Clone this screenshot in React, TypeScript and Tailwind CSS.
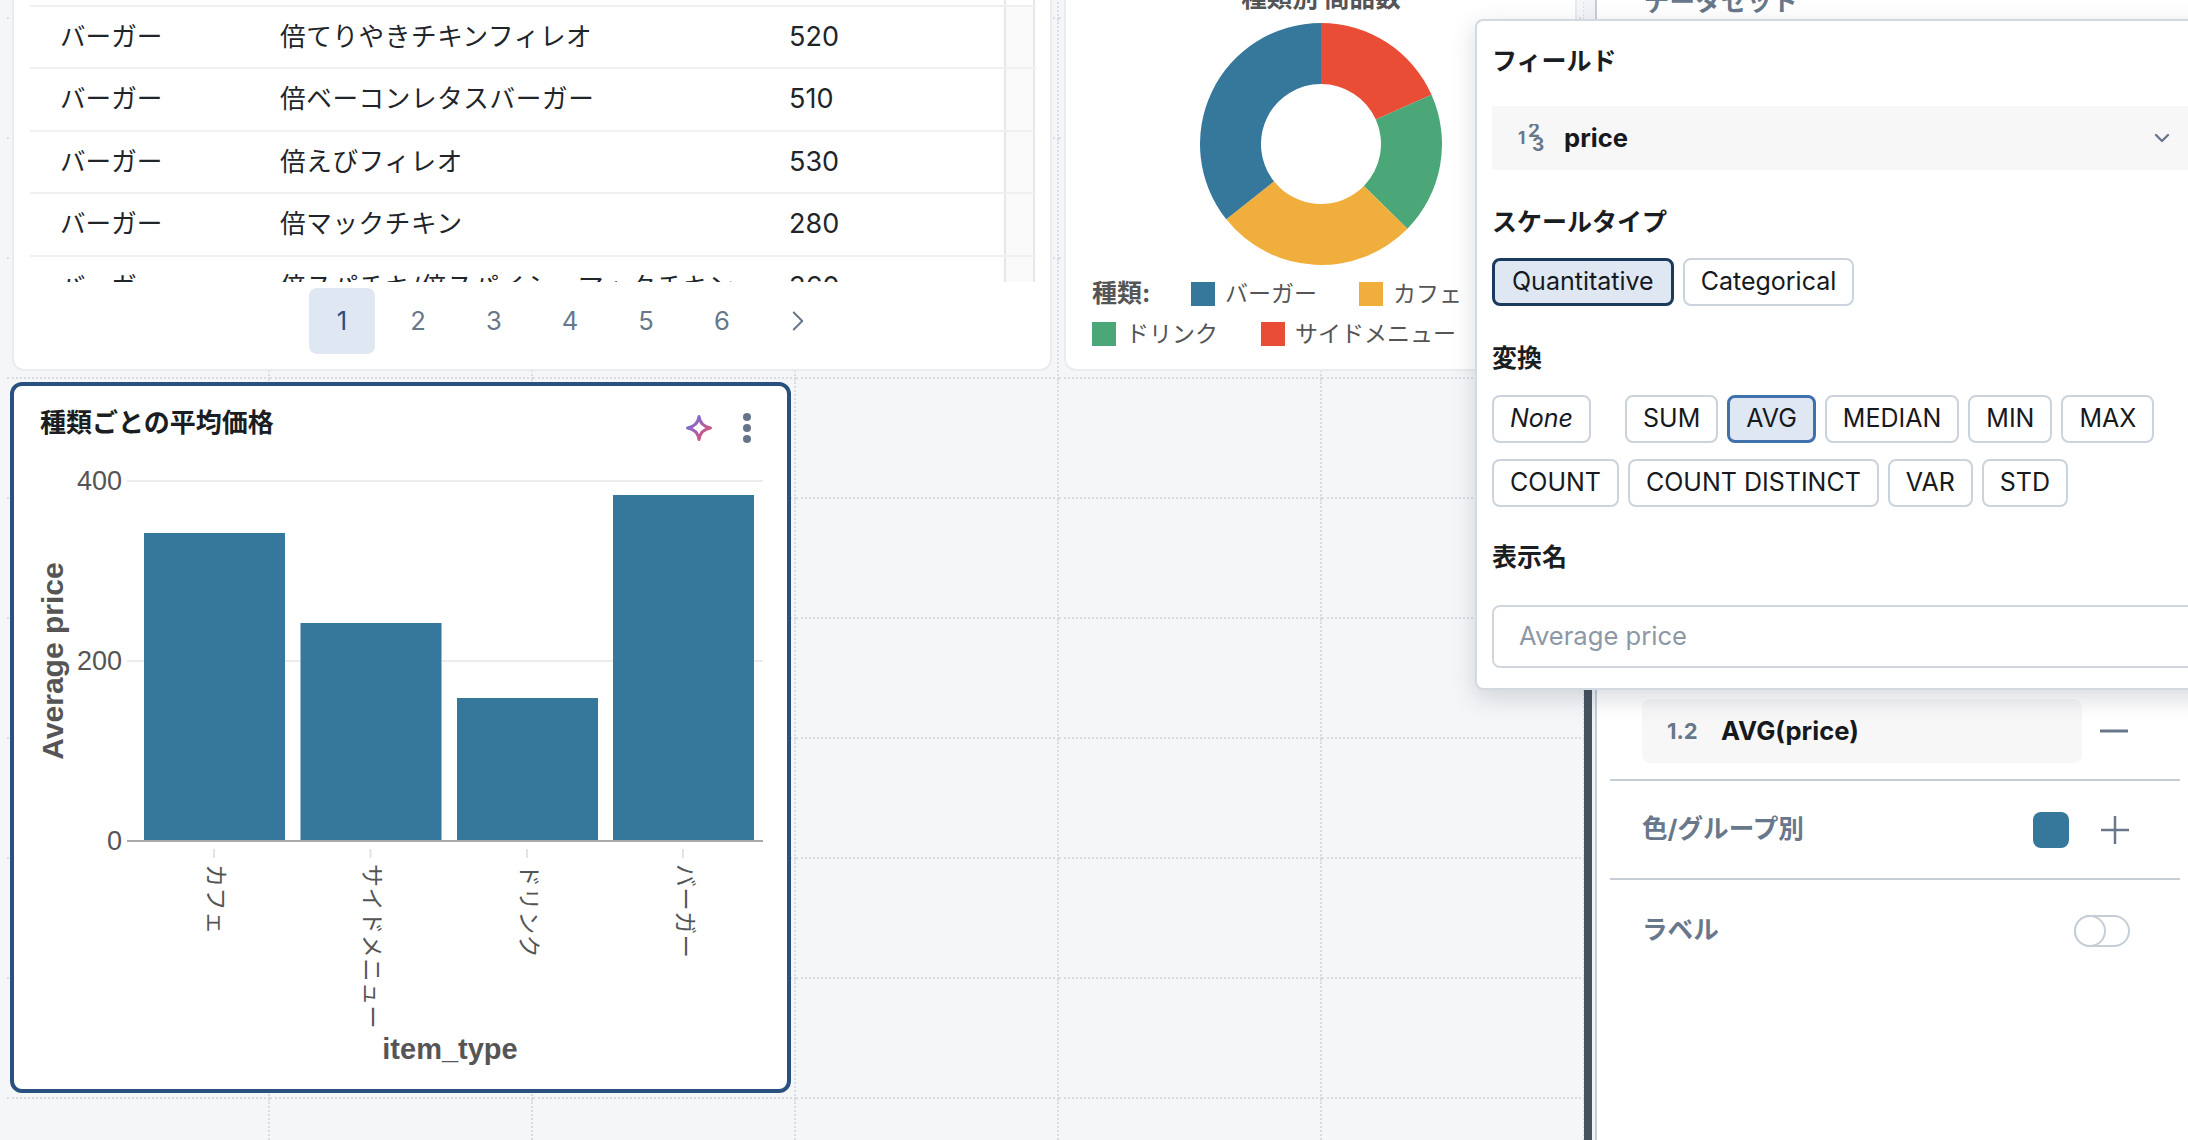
import { ChevronDown, ChevronRight } from "lucide-react";

const rows = [
  ["バーガー", "倍てりやきチキンフィレオ", "520"],
  ["バーガー", "倍ベーコンレタスバーガー", "510"],
  ["バーガー", "倍えびフィレオ", "530"],
  ["バーガー", "倍マックチキン", "280"],
  ["バーガー", "倍スパチキ/倍スパイシーマックチキン", "360"],
];

const cells = Array.from({ length: 66 });

const polar = (r: number, deg: number) => {
  const a = (deg * Math.PI) / 180;
  return `${121 + r * Math.sin(a)} ${121 - r * Math.cos(a)}`;
};

const slice = (from: number, to: number) => {
  const large = to - from > 180 ? 1 : 0;
  return `M${polar(121, from)} A121 121 0 ${large} 1 ${polar(121, to)} L${polar(60, to)} A60 60 0 ${large} 0 ${polar(60, from)} Z`;
};

const Legend = ({ color, label }: { color: string; label: string }) => (
  <div className="flex items-center gap-[10px]">
    <span className={`h-6 w-6 ${color}`} />
    <span>{label}</span>
  </div>
);

const TableCard = () => (
  <div className="col-start-1 col-end-5 row-start-1 row-end-5 mb-[8px] ml-[5px] mr-[7px] flex flex-col overflow-hidden rounded-xl border-2 border-[#e9ebef] bg-white">
    <div className="h-[381px] overflow-hidden pl-[16px] pr-[14px] pt-[43px]">
      <div className="flex h-[62.6px] border-b-2 border-[#eff0f2]">
        <div className="w-[974px]" />
        <div className="w-[31px] border-x-2 border-[#e5e7eb]" />
      </div>
      {rows.map((r) => (
        <div key={r[1]} className="flex h-[62.6px] border-b-2 border-[#eff0f2] text-[25.6px] text-[#212529]">
          <div className="flex w-[974px] items-center">
            <span className="w-[250px] pl-[30px]">{r[0]}</span>
            <span className="w-[509px] whitespace-nowrap tracking-[0.6px]">{r[1]}</span>
            <span className="text-[27px]">{r[2]}</span>
          </div>
          <div className="w-[31px] border-x-2 border-[#e5e7eb] bg-[#fafafa]" />
        </div>
      ))}
    </div>
    <div className="flex flex-1 items-start gap-[10px] pl-[295px] pt-[6px] text-[25.6px] text-[#68778a]">
      <span className="flex h-[66px] w-[66px] items-center justify-center rounded-lg bg-[#dfe7f3] text-[#2a5080]">1</span>
      {["2", "3", "4", "5", "6"].map((n) => (
        <span key={n} className="flex h-[66px] w-[66px] items-center justify-center">{n}</span>
      ))}
      <span className="flex h-[66px] w-[66px] items-center justify-center">
        <ChevronRight size={34} strokeWidth={1.4} />
      </span>
    </div>
  </div>
);

const DonutCard = () => (
  <div className="col-start-5 col-end-7 row-start-1 row-end-5 mb-[8px] ml-[5px] mr-[8px] flex flex-col items-start overflow-hidden rounded-xl border-2 border-[#e9ebef] bg-white pl-[26px] pt-[83px] text-[23px] text-[#555555]">
    <div className="w-[458px] text-center text-[25.6px] font-bold leading-[28px]">種類別 商品数</div>
    <svg width="242" height="242" viewBox="0 0 242 242" className="ml-[108px] mt-[11px] shrink-0">
      <path d={slice(0, 66)} fill="#ea4d36" />
      <path d={slice(66, 134.4)} fill="#4ba777" />
      <path d={slice(134.4, 231.5)} fill="#f0ae3c" />
      <path d={slice(231.5, 360)} fill="#36789b" />
    </svg>
    <div className="mt-[17px] flex h-6 items-center gap-[42px] whitespace-nowrap">
      <span className="w-[57px] text-[25px] font-bold">種類:</span>
      <Legend color="bg-[#36789b]" label="バーガー" />
      <Legend color="bg-[#f0ae3c]" label="カフェ" />
    </div>
    <div className="mt-[16px] flex h-6 items-center gap-[43px] whitespace-nowrap">
      <Legend color="bg-[#4ba777]" label="ドリンク" />
      <Legend color="bg-[#ea4d36]" label="サイドメニュー" />
    </div>
  </div>
);

const BarChart = () => (
  <svg width="773" height="620" viewBox="0 0 773 620" className="block shrink-0">
    <g transform="translate(-14 -466)">
      <line x1="127" x2="763" y1="481" y2="481" stroke="#ececec" strokeWidth="2" />
      <line x1="127" x2="763" y1="661" y2="661" stroke="#ececec" strokeWidth="2" />
      <rect x="144" y="533" width="141" height="307" fill="#36789b" />
      <rect x="300.5" y="623" width="141" height="217" fill="#36789b" />
      <rect x="457" y="698" width="141" height="142" fill="#36789b" />
      <rect x="613" y="495" width="141" height="345" fill="#36789b" />
      <line x1="127" x2="763" y1="841" y2="841" stroke="#aaaaaa" strokeWidth="2" />
      {[214, 370.5, 527, 683].map((x) => (
        <line key={x} x1={x} x2={x} y1="849" y2="858" stroke="#e4e4e4" strokeWidth="2" />
      ))}
      <g fontFamily="'Liberation Sans','Noto Sans CJK JP',sans-serif" fill="#555555">
        <text x="122" y="490" textAnchor="end" fontSize="27">400</text>
        <text x="122" y="670" textAnchor="end" fontSize="27">200</text>
        <text x="122" y="850" textAnchor="end" fontSize="27">0</text>
        {[
          [214, "カフェ"],
          [370.5, "サイドメニュー"],
          [527, "ドリンク"],
          [683, "バーガー"],
        ].map(([x, t]) => (
          <text key={t} transform={`translate(${x} 864) rotate(90)`} dominantBaseline="middle" fontSize="23" letterSpacing="0.6" fontFamily="'Noto Sans CJK JP',sans-serif">
            {t}
          </text>
        ))}
        <text transform="translate(63 661) rotate(-90)" textAnchor="middle" fontSize="30" fontWeight="700">Average price</text>
        <text x="450" y="1059" textAnchor="middle" fontSize="29" fontWeight="700">item_type</text>
      </g>
    </g>
  </svg>
);

const ChartCard = () => (
  <div className="col-start-1 col-end-4 row-start-5 row-end-11 mb-[6px] ml-[3px] mr-[5px] mt-[3px] flex flex-col overflow-hidden rounded-xl border-[4px] border-[#2a5080] bg-white">
    <div className="flex h-[80px] shrink-0 items-start justify-between pl-[26px] pr-[36px] pt-[19px]">
      <span className="text-[26px] font-bold leading-[36px] text-[#1a1d21]">種類ごとの平均価格</span>
      <div className="flex items-center gap-[30px] pt-[8px]">
        <svg width="28" height="28" viewBox="0 0 28 28" fill="none">
          <defs>
            <linearGradient id="spark" x1="0" y1="0" x2="1" y2="1">
              <stop offset="0.1" stopColor="#6f70e6" />
              <stop offset="0.9" stopColor="#e4506a" />
            </linearGradient>
          </defs>
          <path d="M14 2.5C15 9 19 13 25.5 14C19 15 15 19 14 25.5C13 19 9 15 2.5 14C9 13 13 9 14 2.5Z" stroke="url(#spark)" strokeWidth="3" strokeLinejoin="round" />
        </svg>
        <div className="flex flex-col gap-[3px]">
          <span className="h-2 w-2 rounded-full bg-[#66758a]" />
          <span className="h-2 w-2 rounded-full bg-[#66758a]" />
          <span className="h-2 w-2 rounded-full bg-[#66758a]" />
        </div>
      </div>
    </div>
    <BarChart />
  </div>
);

const Chip = ({ label, state, italic }: { label: string; state?: "dark" | "blue"; italic?: boolean }) => {
  let look = "border-2 border-[#cbd3dc] bg-white px-[16px]";
  if (state === "dark") look = "border-[3px] border-[#1c3a5e] bg-[#dfe7f3] px-[17px]";
  if (state === "blue") look = "border-[3px] border-[#3f71ad] bg-[#dfe7f3] px-[16px]";
  return (
    <span className={`flex h-[48px] items-center rounded-lg text-[25px] text-[#16191d] ${look} ${italic ? "italic" : ""}`}>
      {label}
    </span>
  );
};

const Popover = () => (
  <div className="absolute left-[1475px] top-[19px] z-20 flex h-[671px] w-[760px] flex-col rounded-l-lg border-2 border-[#d3d9e1] bg-white pl-[15px] pt-[22px] text-[#1a1d21] shadow-[0_8px_24px_rgba(40,50,70,0.18)]">
    <div className="text-[25px] font-bold leading-[36px]">フィールド</div>
    <div className="mt-[27px] flex h-[64px] w-[745px] items-center bg-[#f7f7f8] pl-[26px]">
      <svg width="28" height="28" viewBox="0 0 28 28" className="shrink-0" fill="#68778a" fontFamily="'Inter',sans-serif" fontWeight="700">
        <text x="0" y="20" fontSize="17">1</text>
        <text x="10" y="13" fontSize="19">2</text>
        <text x="14" y="27" fontSize="19">3</text>
      </svg>
      <span className="ml-[18px] text-[25.6px] font-bold text-[#16191d]">price</span>
      <ChevronDown size={24} strokeWidth={2.4} className="ml-[522px] text-[#68778a]" />
    </div>
    <div className="mt-[34px] text-[25px] font-bold leading-[36px]">スケールタイプ</div>
    <div className="mt-[18px] flex gap-[9px]">
      <Chip label="Quantitative" state="dark" />
      <Chip label="Categorical" />
    </div>
    <div className="mt-[34px] text-[25px] font-bold leading-[36px]">変換</div>
    <div className="mt-[19px] flex gap-[9px]">
      <span className="mr-[25px]">
        <Chip label="None" italic />
      </span>
      <Chip label="SUM" />
      <Chip label="AVG" state="blue" />
      <Chip label="MEDIAN" />
      <Chip label="MIN" />
      <Chip label="MAX" />
    </div>
    <div className="mt-[16px] flex gap-[9px]">
      <Chip label="COUNT" />
      <Chip label="COUNT DISTINCT" />
      <Chip label="VAR" />
      <Chip label="STD" />
    </div>
    <div className="mt-[32px] text-[25px] font-bold leading-[36px]">表示名</div>
    <div className="mt-[30px] flex h-[63px] w-[745px] items-center rounded-lg border-2 border-[#cfd6de] pl-[25px] text-[25.6px] text-[#8d98a6]">
      Average price
    </div>
  </div>
);

const SidePanel = () => (
  <div className="flex h-[1140px] flex-1 border-l-2 border-[#c5cdd6] bg-white text-[25.6px] font-bold text-[#68778a]">
    <div className="flex w-full flex-col pl-[13px] pr-[8px]">
      <div className="-mt-[16px] h-[715px] shrink-0 pl-[34px] leading-[36px]">データセット</div>
      <div className="flex h-[64px] items-center pl-[32px] pr-[50px]">
        <div className="flex h-[64px] w-[440px] items-center rounded-lg bg-[#f7f7f8] pl-[25px]">
          <span className="w-[54px] text-[22px] text-[#68778a]">1.2</span>
          <span className="text-[25.6px] text-[#16191d]">AVG(price)</span>
        </div>
        <svg width="28" height="28" viewBox="0 0 28 28" className="ml-[18px]">
          <line x1="0" x2="28" y1="14" y2="14" stroke="#68778a" strokeWidth="3" />
        </svg>
      </div>
      <div className="mt-[16px] flex h-[101px] items-center border-y-2 border-[#c5cdd6] pl-[32px] pr-[51px]">
        <span className="flex-1">色/グループ別</span>
        <span className="h-9 w-9 rounded-lg bg-[#36789b]" />
        <svg width="28" height="28" viewBox="0 0 28 28" className="ml-[32px]">
          <line x1="0" x2="28" y1="14" y2="14" stroke="#68778a" strokeWidth="2.5" />
          <line x1="14" x2="14" y1="0" y2="28" stroke="#68778a" strokeWidth="2.5" />
        </svg>
      </div>
      <div className="flex h-[101px] items-center pl-[32px] pr-[50px]">
        <span className="flex-1">ラベル</span>
        <span className="flex h-[32px] w-[56px] items-center rounded-full border-2 border-[#c5cdd6]">
          <span className="-ml-[2px] h-[32px] w-[32px] rounded-full border-2 border-[#c5cdd6] bg-white" />
        </span>
      </div>
    </div>
  </div>
);

export default function App() {
  return (
    <div className="relative flex h-[1140px] w-[2188px] overflow-hidden bg-[#f5f6f8] font-['Inter','Noto_Sans_CJK_JP',sans-serif]">
      <div className="w-[1584px] shrink-0 overflow-hidden">
        <div className="-mt-[101px] ml-[7px] grid grid-cols-[repeat(6,263px)] grid-rows-[repeat(11,120px)]">
          <div className="col-start-1 col-end-7 row-start-1 row-end-12 grid grid-cols-[repeat(6,263px)] grid-rows-[repeat(11,120px)]">
            {cells.map((_, i) => (
              <div key={i} className="border-b-2 border-r-2 border-dotted border-[#d9dde3]" />
            ))}
          </div>
          <TableCard />
          <DonutCard />
          <ChartCard />
        </div>
      </div>
      <div className="w-[8px] shrink-0 bg-[#f1f3f6] pt-[300px]">
        <div className="h-full bg-[#46535f]" />
      </div>
      <div className="w-[3px] shrink-0 bg-[#f1f3f6]" />
      <SidePanel />
      <Popover />
    </div>
  );
}
